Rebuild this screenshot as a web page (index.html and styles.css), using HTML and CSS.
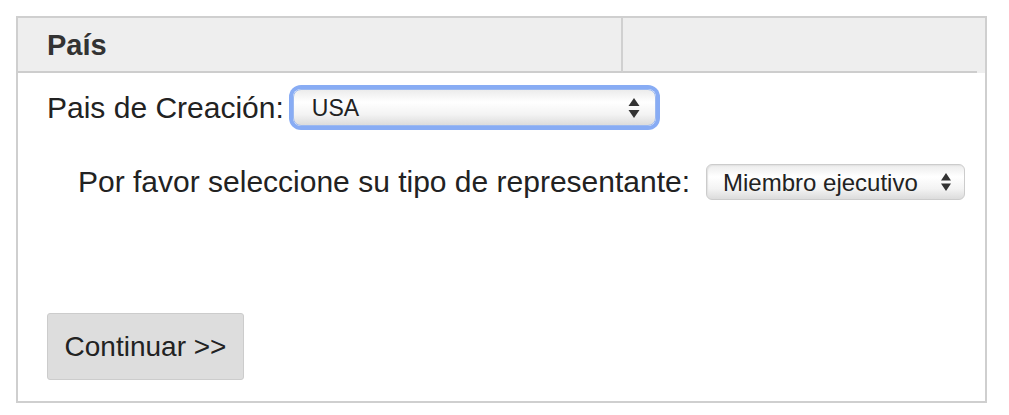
FILE: index.html
```html
<!DOCTYPE html>
<html>
<head>
<meta http-equiv="Content-Type" content="text/html; charset=utf-8"/>
<title>País</title>
<link rel="stylesheet" href="styles.css">
</head>
<body>
<div class="panel">
  <div class="panel-head">
    <div class="head-title">País</div>
    <div class="head-rest"></div>
  </div>
  <div class="panel-body">
    <div class="row row-country">
      <label for="pais">Pais de Creación:</label>
      <span class="select-wrap wide focus">
        <select id="pais" class="select select-big">
          <option>USA</option>
        </select>
        <svg class="arrows" width="12" height="24" viewBox="0 0 12 24"><path d="M6 2 L11.5 10 L0.5 10 Z M6 22 L11.5 14 L0.5 14 Z" fill="#333"/></svg>
      </span>
    </div>
    <div class="row row-type">
      <label for="tipo">Por favor seleccione su tipo de representante:</label>
      <span class="select-wrap">
        <select id="tipo" class="select select-small">
          <option>Miembro ejecutivo</option>
        </select>
        <svg class="arrows" width="12" height="24" viewBox="0 0 12 24"><path d="M6 3 L11 10.5 L1 10.5 Z M6 21 L11 13.5 L1 13.5 Z" fill="#333"/></svg>
      </span>
    </div>
    <div class="actions">
      <button class="btn" type="button">Continuar &gt;&gt;</button>
    </div>
  </div>
</div>
</body>
</html>
```

FILE: styles.css
```css
body {
  margin: 0;
  padding: 16px;
  background-color: white;
  font-family: "Liberation Sans", Arial, sans-serif;
  color: #222;
}

.panel {
  width: 967px;
  height: 383px;
  border: 2px solid #cfcfcf;
  display: flex;
  flex-direction: column;
}

.panel-head {
  display: flex;
  height: 55px;
  background-color: #eeeeee;
}

.head-title {
  width: 574px;
  padding-left: 29px;
  border-right: 2px solid #d0d0d0;
  border-bottom: 2px solid #cdcdcd;
  font-size: 29px;
  font-weight: bold;
  line-height: 55px;
  color: #333;
}

.head-rest {
  width: 354px;
  border-bottom: 2px solid #cdcdcd;
}

.panel-body {
  padding: 0 0 0 29px;
  font-size: 30px;
  color: #222;
}

.row {
  display: flex;
  align-items: center;
}

.row-country {
  margin-top: 16px;
}

.row-country label {
  margin-right: 9px;
}

.row-type {
  margin-top: 38px;
  padding-left: 31px;
}

.row-type label {
  margin-right: 16px;
}

.select-wrap {
  position: relative;
  display: inline-block;
}

.select {
  -webkit-appearance: none;
  appearance: none;
  font-family: "Liberation Sans", Arial, sans-serif;
  color: #222;
  border: 1px solid #c4c4c4;
  border-radius: 6px;
  background: linear-gradient(#ececec, #ffffff 35%, #f3f3f3 70%, #dcdcdc);
  box-shadow: inset 1px 1px 1px #e2e2e2;
  margin: 0;
  display: block;
}

.select-big {
  width: 363px;
  height: 37px;
  padding: 0 0 0 18px;
  font-size: 23px;
  border-radius: 8px;
}

.focus .select {
  outline: none;
  box-shadow: 0 0 0 4px #88acf4;
  border-color: #9cb9f0;
}

.select-small {
  width: 259px;
  height: 36px;
  padding: 0 0 0 16px;
  font-size: 24px;
  border-color: #cccccc;
}

.arrows {
  position: absolute;
  top: 50%;
  margin-top: -12px;
  right: 13px;
  pointer-events: none;
}

.select-wrap.wide .arrows {
  right: 16px;
}

.actions {
  margin-top: 113px;
}

.btn {
  display: block;
  width: 197px;
  height: 67px;
  font-family: "Liberation Sans", Arial, sans-serif;
  font-size: 28px;
  color: #222;
  background-color: #dddddd;
  border: 1px solid #cccccc;
  border-radius: 3px;
  padding: 0;
}
```
